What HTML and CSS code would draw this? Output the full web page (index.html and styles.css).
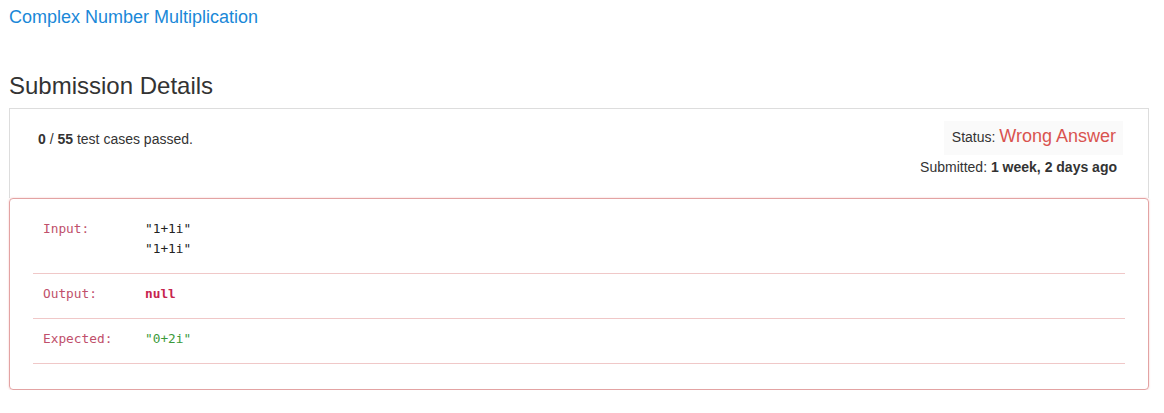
FILE: index.html
```html
<!DOCTYPE html>
<html>
<head>
<meta charset="utf-8">
<link rel="stylesheet" href="styles.css">
</head>
<body>
<div class="page">
  <a class="problem-link" href="#">Complex Number Multiplication</a>
  <h3 class="heading">Submission Details</h3>
  <div class="panel">
    <div class="summary">
      <div class="passed"><b>0</b>&nbsp;/&nbsp;<b>55</b> test cases passed.</div>
      <div class="meta">
        <div class="status">Status: <span class="status-value">Wrong Answer</span></div>
        <div class="submitted">Submitted: <b>1 week, 2 days ago</b></div>
      </div>
    </div>
    <div class="result">
      <div class="row">
        <div class="label">Input:</div>
        <div class="value">"1+1i"<br>"1+1i"</div>
      </div>
      <div class="row">
        <div class="label">Output:</div>
        <div class="value output">null</div>
      </div>
      <div class="row">
        <div class="label">Expected:</div>
        <div class="value expected">"0+2i"</div>
      </div>
    </div>
  </div>
</div>
</body>
</html>
```

FILE: styles.css
```css
html, body {
  margin: 0;
  padding: 0;
  background: #fff;
}
body {
  font-family: "Liberation Sans", Arial, sans-serif;
  font-size: 14px;
  color: #333;
}
.page {
  padding: 6px 15px 0 9px;
}
.problem-link {
  display: block;
  font-size: 18px;
  line-height: 22px;
  color: #1a88d8;
  text-decoration: none;
}
.heading {
  margin: 43px 0 0;
  font-size: 24px;
  font-weight: normal;
  line-height: 30px;
  color: #333;
}
.panel {
  margin-top: 7px;
  width: 1140px;
}
.summary {
  border: 1px solid #ddd;
  border-bottom: none;
  display: flex;
  justify-content: space-between;
  padding: 12px 30px 17px 28px;
  height: 60px;
}
.passed {
  margin-top: 8px;
  line-height: 20px;
}
.meta {
  display: flex;
  flex-direction: column;
  align-items: flex-end;
}
.status {
  background: #fafafa;
  padding: 4px 7px 6px 8px;
  line-height: 23px;
  margin-right: -5px;
}
.status-value {
  color: #d9534f;
  font-size: 18px;
}
.submitted {
  font-size: 14px;
  margin-top: 2px;
  line-height: 20px;
  margin-right: 1px;
}
.result {
  border: 1px solid #e3a3a3;
  border-radius: 4px;
  box-shadow: 0 0 2px rgba(217, 83, 79, 0.35);
  padding: 10px 23px 25px 23px;
}
.row {
  display: flex;
  border-bottom: 1px solid #f0c8c8;
  font-family: "DejaVu Sans Mono", "Liberation Mono", monospace;
  font-size: 12.8px;
  padding: 10px 0 14px 10px;
  line-height: 20px;
}
.label {
  width: 102px;
  color: #c0506b;
}
.value {
  color: #222;
  font-weight: 500;
}
.output {
  color: #c7254e;
  font-weight: bold;
}
.expected {
  color: #3a9a3a;
}
```
